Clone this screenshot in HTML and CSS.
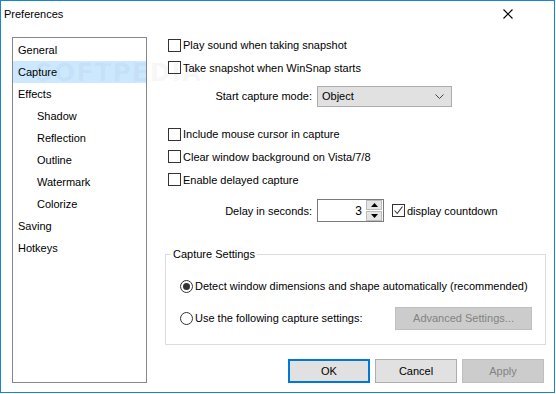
FILE: index.html
```html
<!DOCTYPE html>
<html>
<head>
<meta charset="utf-8">
<title>Preferences</title>
<link rel="stylesheet" href="styles.css">
</head>
<body>
<div class="window">
  <div class="titlebar">
    <span class="title">Preferences</span>
    <svg class="close" width="10" height="10" viewBox="0 0 10 10"><path d="M0.5 0.5 L9.5 9.5 M9.5 0.5 L0.5 9.5" stroke="#000" stroke-width="1.1" fill="none"/></svg>
  </div>
  <div class="body">
    <ul class="nav">
      <li class="item">General</li>
      <li class="item selected">Capture</li>
      <li class="item">Effects</li>
      <li class="item sub">Shadow</li>
      <li class="item sub">Reflection</li>
      <li class="item sub">Outline</li>
      <li class="item sub">Watermark</li>
      <li class="item sub">Colorize</li>
      <li class="item">Saving</li>
      <li class="item">Hotkeys</li>
    </ul>
    <div class="content">
      <div class="panel">
        <label class="row r1"><span class="cb"></span>Play sound when taking snapshot</label>
        <label class="row r2"><span class="cb"></span>Take snapshot when WinSnap starts</label>
        <div class="field combo-row">
          <span class="flabel">Start capture mode:</span>
          <div class="combo"><span>Object</span>
            <svg class="chev" width="9" height="5" viewBox="0 0 9 5"><path d="M0.5 0.5 L4.5 4.5 L8.5 0.5" stroke="#444" stroke-width="1" fill="none"/></svg>
          </div>
        </div>
        <label class="row r4"><span class="cb"></span>Include mouse cursor in capture</label>
        <label class="row r5"><span class="cb"></span>Clear window background on Vista/7/8</label>
        <label class="row r6"><span class="cb"></span>Enable delayed capture</label>
        <div class="field spin-row">
          <span class="flabel">Delay in seconds:</span>
          <div class="spin">
            <span class="spin-val">3</span>
            <div class="spin-btns">
              <span class="sbtn"><svg width="7" height="4" viewBox="0 0 7 4"><path d="M0 4 L3.5 0 L7 4 Z" fill="#000"/></svg></span>
              <span class="sbtn"><svg width="7" height="4" viewBox="0 0 7 4"><path d="M0 0 L3.5 4 L7 0 Z" fill="#000"/></svg></span>
            </div>
          </div>
          <label class="countdown"><span class="cb checked"><svg width="11" height="11" viewBox="0 0 11 11"><path d="M1.5 5.5 L4.2 8.5 L9.5 1.5" stroke="#333" stroke-width="1.1" fill="none"/></svg></span>display countdown</label>
        </div>
        <fieldset class="group">
          <legend>Capture Settings</legend>
          <label class="radio-row rr1"><span class="rb on"></span>Detect window dimensions and shape automatically (recommended)</label>
          <div class="radio-row rr2">
            <label class="rlabel"><span class="rb"></span>Use the following capture settings:</label>
            <button class="btn disabled adv">Advanced Settings...</button>
          </div>
        </fieldset>
      </div>
      <div class="buttons">
        <button class="btn default">OK</button>
        <button class="btn">Cancel</button>
        <button class="btn disabled">Apply</button>
      </div>
    </div>
  </div>
  <div class="watermark">SOFTPEDIA</div>
</div>
</body>
</html>
```

FILE: styles.css
```css
* { box-sizing: border-box; }
html, body { margin: 0; padding: 0; background: #fff; }
body {
  font-family: "Segoe UI", "Liberation Sans", Arial, sans-serif;
  font-size: 11px;
  color: #000;
  white-space: nowrap;
}
.window {
  position: relative;
  width: 555px;
  height: 393px;
  border: 1px solid #1883d7;
  background: #fff;
  overflow: hidden;
}
.titlebar {
  height: 29px;
  display: flex;
  align-items: center;
  justify-content: space-between;
  padding: 0 41px 0 3px;
}
.title { line-height: 16px; margin-top: -4px; }
.close { display: block; margin-top: -4px; }
.body {
  display: flex;
  height: 362px;
}
.nav {
  list-style: none;
  margin: 7px 0 0 11px;
  padding: 1px 0 0;
  width: 135px;
  height: 346px;
  border: 1px solid #828790;
}
.item {
  height: 22px;
  line-height: 22px;
  padding-left: 5px;
}
.item.sub { padding-left: 24px; }
.item.selected { background: #cce8ff; }
.content {
  margin-left: 18px;
  width: 381px;
  display: flex;
  flex-direction: column;
}
.panel { display: flex; flex-direction: column; }
.row {
  display: flex;
  align-items: center;
  height: 23px;
  padding-left: 3px;
}
.r1 { margin-top: 4px; height: 22px; }
.r4 { margin-top: 17px; height: 22px; }
.cb {
  width: 13px;
  height: 13px;
  border: 1px solid #333;
  background: #fff;
  margin-right: 2px;
  display: inline-flex;
  align-items: center;
  justify-content: center;
  flex: none;
}
.field {
  display: flex;
  align-items: center;
}
.flabel {
  width: 147px;
  text-align: right;
  margin-right: 5px;
}
.combo-row { margin-top: 7px; height: 20px; }
.combo {
  width: 135px;
  height: 21px;
  background: #e1e1e1;
  border: 1px solid #adadad;
  display: flex;
  align-items: center;
  justify-content: space-between;
  padding: 0 7px 0 4px;
}
.spin-row { margin-top: 8px; height: 23px; }
.spin {
  width: 67px;
  height: 23px;
  border: 1px solid #7a7a7a;
  display: flex;
  align-items: center;
}
.spin-val { flex: 1; text-align: right; padding-right: 4px; font-size: 12px; }
.spin-btns {
  display: flex;
  flex-direction: column;
  gap: 1px;
  width: 17px;
  height: 21px;
  padding: 0 1px 0 0;
}
.sbtn {
  flex: 1;
  background: #e5e5e5;
  border: 1px solid #bcbcbc;
  display: flex;
  align-items: center;
  justify-content: center;
}
.countdown {
  display: flex;
  align-items: center;
  margin-left: 8px;
}
.group {
  margin: 24px 0 0;
  padding: 0 0 13px 0;
  border: 1px solid #dcdcdc;
  height: 99px;
  min-width: 0;
}
.group legend {
  margin-left: 5px;
  padding: 0 2px;
  line-height: 16px;
}
.radio-row {
  display: flex;
  align-items: center;
  margin-left: 14px;
}
.rr1 { margin-top: 13px; height: 22px; }
.rr2 { margin-top: 9px; height: 24px; justify-content: space-between; padding-right: 13px; }
.rlabel { display: flex; align-items: center; }
.rb {
  width: 13px;
  height: 13px;
  border: 1px solid #333;
  border-radius: 50%;
  margin-right: 2px;
  display: inline-flex;
  align-items: center;
  justify-content: center;
  flex: none;
}
.rb.on::after {
  content: "";
  width: 7px;
  height: 7px;
  border-radius: 50%;
  background: #333;
}
.btn {
  font: inherit;
  color: #000;
  width: 82px;
  height: 24px;
  padding: 0;
  background: #e1e1e1;
  border: 1px solid #adadad;
}
.btn.default { border: 2px solid #0078d7; }
.btn.disabled { background: #cccccc; border-color: #bfbfbf; color: #838383; }
.adv { width: 137px; height: 23px; }
.buttons {
  display: flex;
  justify-content: flex-end;
  gap: 5px;
  margin-top: 14px;
  padding-right: 2px;
}
.watermark {
  position: absolute;
  left: 34px;
  top: 57px;
  font-family: "DejaVu Sans", sans-serif;
  font-weight: bold;
  font-size: 25px;
  letter-spacing: 1px;
  color: rgba(0, 0, 0, 0.045);
  pointer-events: none;
}
```
